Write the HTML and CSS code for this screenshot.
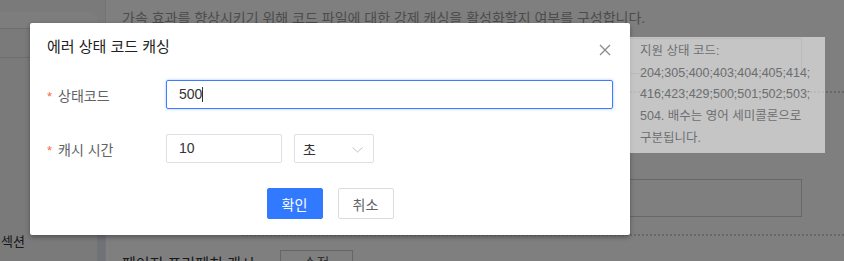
FILE: index.html
```html
<!DOCTYPE html>
<html lang="ko">
<head>
    <meta charset="UTF-8">
    <title>에러 상태 코드 캐싱</title>
    <link rel="stylesheet" href="styles.css">
</head>
<body>
    <div class="page">
        <div class="sidebar">
            <div class="side-box"></div>
            <div class="side-line"></div>
            <div class="side-bottom">
                <span class="side-label">섹션</span>
                <span class="side-bar"></span>
            </div>
        </div>
        <div class="main">
            <p class="desc">가속 효과를 향상시키기 위해 코드 파일에 대한 강제 캐싱을 활성화할지 여부를 구성합니다.</p>
            <div class="field-box first"></div>
            <div class="dotted"></div>
            <p class="desc small">상태 코드별로 캐시됩니다.</p>
            <div class="field-box second"></div>
            <div class="dotted"></div>
            <div class="bottom-row">
                <span class="bottom-label">페이지 프리페치 캐시</span>
                <button class="ghost-btn">수정</button>
            </div>
        </div>
    </div>

    <div class="mask"></div>

    <div class="dialog">
        <div class="dialog-header">
            <span class="dialog-title">에러 상태 코드 캐싱</span>
            <svg class="close" width="12" height="12" viewBox="0 0 12 12">
                <path d="M1 1L11 11M11 1L1 11" stroke="#8a8a8a" stroke-width="1.3" fill="none"/>
            </svg>
        </div>
        <div class="dialog-body">
            <div class="form-row">
                <label class="form-label"><span class="req">*</span>상태코드</label>
                <div class="input focus">500<span class="caret"></span></div>
            </div>
            <div class="form-row">
                <label class="form-label"><span class="req">*</span>캐시 시간</label>
                <div class="input short">10</div>
                <div class="select">
                    <span>초</span>
                    <svg width="11" height="6" viewBox="0 0 11 6">
                        <path d="M0.5 0.5L5.5 5L10.5 0.5" stroke="#c0c4cc" stroke-width="1" fill="none"/>
                    </svg>
                </div>
            </div>
        </div>
        <div class="dialog-footer">
            <button class="btn primary">확인</button>
            <button class="btn">취소</button>
        </div>
    </div>

    <div class="tooltip">
        <span class="arrow"></span>
        지원 상태 코드:<br>
        204;305;400;403;404;405;414;<br>
        416;423;429;500;501;502;503;<br>
        504. 배수는 영어 세미콜론으로<br>
        구분됩니다.
    </div>
</body>
</html>
```

FILE: styles.css
```css
body {
    margin: 0;
    font-family: "Liberation Sans", "Noto Sans CJK KR", sans-serif;
    background: #fff;
    width: 844px;
    height: 261px;
    overflow: hidden;
    position: relative;
}
.page {
    display: flex;
    height: 261px;
}
.sidebar {
    width: 105px;
    background: #f4f4f5;
    border-right: 1px solid #eaeaea;
    display: flex;
    flex-direction: column;
}
.side-box {
    margin-top: 12px;
    width: 97px;
    height: 16px;
    background: #fbfbfb;
    border-top-right-radius: 8px;
    border-bottom: 1px solid #dcdcdc;
}
.side-line {
    margin-top: 28px;
    width: 97px;
    border-bottom: 1px solid #dcdcdc;
}
.side-bottom {
    margin-top: auto;
    height: 30px;
    display: flex;
    justify-content: space-between;
    align-items: flex-start;
}
.side-label {
    font-size: 13px;
    color: #333;
    margin-left: 1px;
}
.side-bar {
    width: 8px;
    height: 26px;
    margin-top: 4px;
    background: #dfe4ee;
}
.main {
    flex: 1;
    padding-left: 16px;
}
.desc {
    margin: 8px 0 0;
    font-size: 14px;
    line-height: 20px;
    color: #999;
}
.desc.small {
    margin-top: 66px;
    margin-left: 340px;
}
.field-box {
    margin-left: 158px;
    width: 520px;
    border: 1px solid #cfcfcf;
}
.field-box.first {
    margin-top: 10px;
    height: 34px;
}
.field-box.second {
    margin-top: 0;
    height: 36px;
}
.dotted {
    margin-top: 17px;
    margin-left: 120px;
    border-top: 2px dotted #d0d0d0;
}
.bottom-row {
    margin-top: 14px;
    display: flex;
    align-items: flex-start;
}
.bottom-label {
    font-size: 15px;
    color: #333;
    margin-top: 2px;
    width: 158px;
}
.ghost-btn {
    width: 73px;
    height: 12px;
    background: #fff;
    border: 1px solid #ccc;
    border-bottom: none;
    font-size: 14px;
    color: #666;
    font-family: inherit;
}
.mask {
    position: absolute;
    inset: 0;
    background: rgba(0, 0, 0, 0.5);
}
.dialog {
    position: absolute;
    left: 30px;
    top: 23px;
    width: 600px;
    height: 212px;
    background: #fff;
    border-radius: 2px;
    box-shadow: 0 2px 5px rgba(0, 0, 0, 0.35);
    display: flex;
    flex-direction: column;
}
.dialog-header {
    display: flex;
    justify-content: space-between;
    align-items: center;
    padding: 13px 19px 13px 17px;
    height: 18px;
}
.dialog-title {
    font-size: 15px;
    color: #222;
}
.close {
    margin-top: 10px;
}
.dialog-body {
    padding: 13px 17px 0;
    display: flex;
    flex-direction: column;
    gap: 25px;
}
.form-row {
    display: flex;
    align-items: center;
}
.form-label {
    width: 119px;
    font-size: 14px;
    color: #606266;
}
.req {
    color: #f56c4c;
    margin-right: 6px;
    font-size: 13px;
}
.input {
    flex: 1;
    height: 27px;
    border: 1px solid #dcdfe6;
    border-radius: 2px;
    padding-left: 12px;
    font-size: 14px;
    line-height: 27px;
    color: #333;
}
.input.focus {
    border-color: #3d7bff;
    box-shadow: 0 0 3px rgba(61, 123, 255, 0.45);
}
.caret {
    display: inline-block;
    width: 1px;
    height: 15px;
    background: #333;
    vertical-align: -3px;
}
.input.short {
    flex: none;
    width: 102px;
}
.select {
    margin-left: 12px;
    height: 27px;
    border: 1px solid #dcdfe6;
    border-radius: 2px;
    display: flex;
    align-items: center;
    justify-content: space-between;
    padding: 0 10px 0 8px;
    width: 60px;
    font-size: 14px;
    color: #333;
}
.select svg {
    margin-top: 3px;
}
.dialog-footer {
    margin-top: 25px;
    display: flex;
    justify-content: center;
    gap: 15px;
}
.btn {
    width: 56px;
    height: 31px;
    border: 1px solid #dcdcdc;
    border-radius: 2px;
    background: #fff;
    font-family: inherit;
    font-size: 14px;
    color: #606266;
    padding: 0;
}
.btn.primary {
    background: #3179ff;
    border-color: #3179ff;
    color: #fff;
}
.tooltip {
    position: absolute;
    left: 625px;
    top: 37px;
    width: 170px;
    height: 108px;
    padding: 4px 15px;
    background: #fff;
    opacity: 0.55;
    font-size: 12.5px;
    line-height: 21.7px;
    color: #606266;
}
.arrow {
    position: absolute;
    left: -6px;
    top: 52px;
    border-top: 6px solid transparent;
    border-bottom: 6px solid transparent;
    border-right: 6px solid #fff;
}
```
